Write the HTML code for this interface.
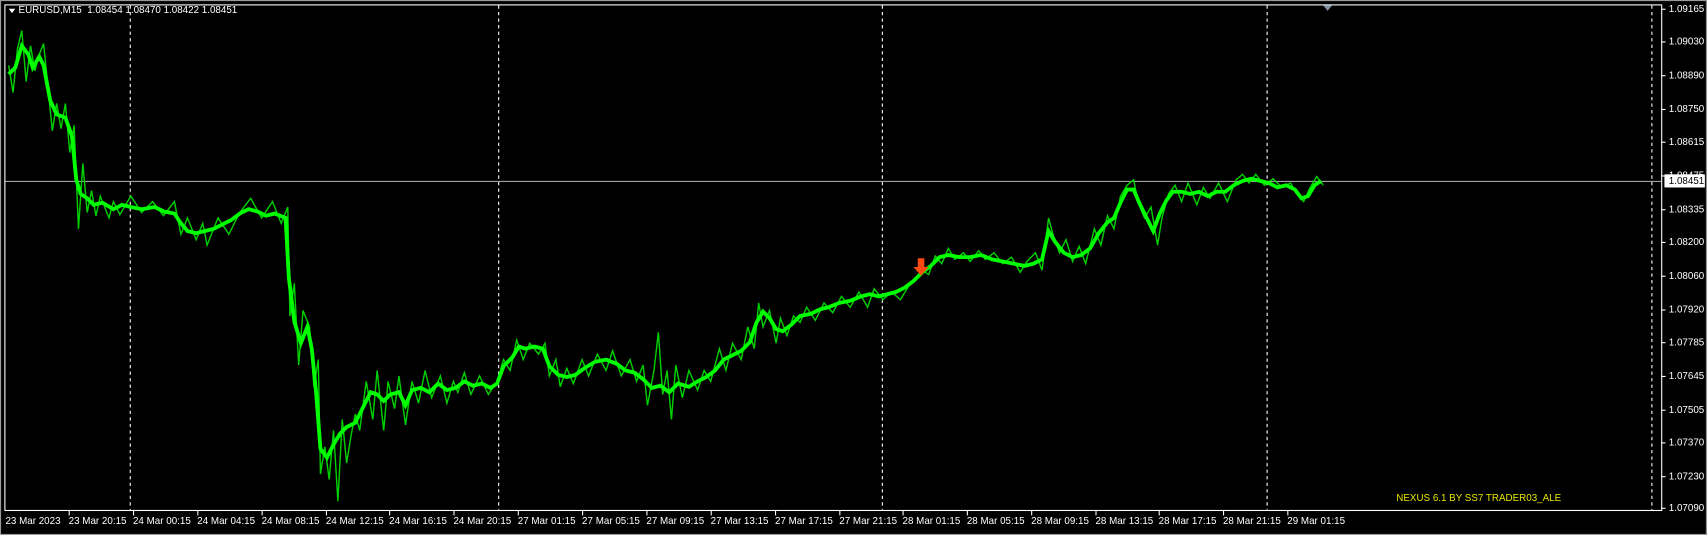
<!DOCTYPE html>
<html><head><meta charset="utf-8"><style>
html,body{margin:0;padding:0;background:#000;overflow:hidden}
#w{width:1566px;height:491px;transform:scale(1.09,1.0896);transform-origin:0 0;position:relative;background:#000;font-family:"Liberation Sans",sans-serif}
.t{position:absolute;font-size:9px;line-height:11px;color:#fff;white-space:nowrap}
</style></head><body><div id="w">
<svg width="1566" height="491" style="position:absolute;left:0;top:0">
<rect x="0" y="0" width="1566" height="491" fill="#000"/>
<rect x="0.5" y="0.5" width="1565" height="490" fill="none" stroke="#9a9a9a"/>
<rect x="4.5" y="4.5" width="1520" height="464" fill="none" stroke="#fff"/>
<g stroke="#fff" stroke-dasharray="3,3" stroke-width="1">
<line x1="119.5" y1="5" x2="119.5" y2="468"/>
<line x1="457.5" y1="5" x2="457.5" y2="468"/>
<line x1="809.5" y1="5" x2="809.5" y2="468"/>
<line x1="1162.5" y1="5" x2="1162.5" y2="468"/>
<line x1="1515.5" y1="5" x2="1515.5" y2="468"/>
</g>
<line x1="5" y1="166.5" x2="1524" y2="166.5" stroke="#a0a0a8"/>
<polygon points="1214,5 1222,5 1218,10" fill="#7f8fa0"/>
<polyline fill="none" stroke="#00d000" stroke-width="1.3" points="8,60 12,85 16,45 20,28 24,75 28,42 32,65 36,50 40,40 44,80 48,120 52,95 56,118 60,95 64,140 68,115 72,210 76,150 80,195 84,175 88,198 92,180 100,200 104,185 110,197 120,180 130,195 140,185 150,198 160,185 166,215 172,200 180,220 186,205 190,225 200,200 210,215 220,195 230,182 240,200 250,185 258,205 264,190 266,290 270,260 274,335 278,285 284,300 288,355 292,330 294,435 298,410 302,440 306,395 310,460 314,385 318,425 322,400 326,380 330,395 336,350 342,385 346,340 352,395 356,350 362,375 366,345 372,390 378,350 384,370 390,340 396,365 404,345 410,370 416,350 420,360 426,342 432,362 440,345 448,362 456,350 462,330 468,340 474,312 480,330 486,315 494,325 500,315 504,345 510,330 514,355 520,338 526,352 534,330 540,345 548,325 556,340 562,322 570,345 578,330 584,350 590,335 594,372 600,340 604,305 608,362 612,340 616,385 620,335 626,365 632,340 640,358 646,340 652,350 660,320 666,340 672,315 680,330 686,300 692,320 696,278 700,300 706,285 712,315 716,292 722,308 728,290 734,296 740,282 748,294 756,278 764,287 772,272 780,282 788,268 796,282 802,265 810,275 818,268 826,275 834,262 842,255 846,248 852,252 858,235 864,242 870,228 876,238 884,232 890,240 898,230 904,238 912,232 920,242 928,236 936,250 942,240 950,232 956,248 962,200 966,215 972,232 978,220 984,240 990,226 996,242 1004,210 1010,225 1016,198 1022,210 1028,180 1034,170 1040,165 1044,185 1050,200 1056,190 1062,225 1066,200 1072,178 1078,170 1084,185 1090,168 1098,188 1104,172 1110,182 1118,168 1126,185 1134,165 1140,160 1146,168 1152,160 1160,170 1168,164 1176,172 1184,168 1190,178 1196,185 1202,172 1208,162 1214,170"/>
<polyline fill="none" stroke="#00ff00" stroke-width="3.5" points="8,68 14,62 20,42 26,50 30,62 36,52 40,60 46,92 52,105 60,108 66,125 70,165 74,178 80,182 86,188 94,186 104,192 112,188 120,190 130,192 142,190 150,194 160,196 166,205 172,212 180,214 188,212 196,210 204,206 212,202 220,196 228,192 236,194 244,198 252,196 262,200 265,255 270,295 276,315 282,300 286,320 290,360 294,412 300,420 306,408 312,398 318,392 326,388 334,372 340,360 346,362 352,368 358,362 366,360 372,372 378,358 386,356 394,360 402,352 410,358 418,356 426,350 434,354 442,352 450,356 456,352 462,336 470,328 476,318 482,320 490,318 498,320 504,336 512,344 520,346 528,344 536,338 546,332 556,330 566,334 574,340 582,342 590,348 598,356 606,354 614,360 622,352 632,355 640,350 648,346 656,340 664,330 672,326 680,322 688,314 694,296 700,286 706,292 712,302 718,304 726,298 734,290 744,288 752,284 760,282 770,278 780,276 790,272 798,270 806,272 814,270 822,268 830,264 838,258 846,250 854,244 862,236 870,234 880,236 890,236 900,234 910,238 920,240 930,242 940,244 948,242 956,238 962,212 968,222 976,232 984,236 992,234 1000,228 1008,214 1016,204 1022,200 1028,186 1034,174 1040,174 1046,188 1052,200 1058,212 1064,196 1070,184 1076,176 1084,176 1092,178 1100,176 1108,180 1116,176 1124,176 1132,170 1140,166 1148,164 1156,166 1164,168 1172,172 1180,170 1188,174 1194,182 1200,180 1206,170 1212,166"/>
<path d="M842,237 h6 v8 h4 l-7,8 l-7,-8 h4 z" fill="#ff4a12"/>
<g stroke="#fff">
<line x1="1524" y1="8.5" x2="1528" y2="8.5"/><line x1="1524" y1="38.5" x2="1528" y2="38.5"/><line x1="1524" y1="69.5" x2="1528" y2="69.5"/><line x1="1524" y1="100.5" x2="1528" y2="100.5"/><line x1="1524" y1="130.5" x2="1528" y2="130.5"/><line x1="1524" y1="161.5" x2="1528" y2="161.5"/><line x1="1524" y1="192.5" x2="1528" y2="192.5"/><line x1="1524" y1="222.5" x2="1528" y2="222.5"/><line x1="1524" y1="253.5" x2="1528" y2="253.5"/><line x1="1524" y1="284.5" x2="1528" y2="284.5"/><line x1="1524" y1="314.5" x2="1528" y2="314.5"/><line x1="1524" y1="345.5" x2="1528" y2="345.5"/><line x1="1524" y1="376.5" x2="1528" y2="376.5"/><line x1="1524" y1="406.5" x2="1528" y2="406.5"/><line x1="1524" y1="437.5" x2="1528" y2="437.5"/><line x1="1524" y1="466.5" x2="1528" y2="466.5"/>
<line x1="63.5" y1="468" x2="63.5" y2="473"/><line x1="122.5" y1="468" x2="122.5" y2="473"/><line x1="181.5" y1="468" x2="181.5" y2="473"/><line x1="240.5" y1="468" x2="240.5" y2="473"/><line x1="299.5" y1="468" x2="299.5" y2="473"/><line x1="357.5" y1="468" x2="357.5" y2="473"/><line x1="416.5" y1="468" x2="416.5" y2="473"/><line x1="475.5" y1="468" x2="475.5" y2="473"/><line x1="534.5" y1="468" x2="534.5" y2="473"/><line x1="593.5" y1="468" x2="593.5" y2="473"/><line x1="652.5" y1="468" x2="652.5" y2="473"/><line x1="711.5" y1="468" x2="711.5" y2="473"/><line x1="770.5" y1="468" x2="770.5" y2="473"/><line x1="828.5" y1="468" x2="828.5" y2="473"/><line x1="887.5" y1="468" x2="887.5" y2="473"/><line x1="946.5" y1="468" x2="946.5" y2="473"/><line x1="1005.5" y1="468" x2="1005.5" y2="473"/><line x1="1063.5" y1="468" x2="1063.5" y2="473"/><line x1="1122.5" y1="468" x2="1122.5" y2="473"/><line x1="1181.5" y1="468" x2="1181.5" y2="473"/>
</g>
<rect x="1527" y="160" width="37" height="12" fill="#fff"/>
<polygon points="8,8 14,8 11,12" fill="#fff"/>
</svg>
<div class="t" style="left:17px;top:4px">EURUSD,M15&nbsp; 1.08454 1.08470 1.08422 1.08451</div>
<div class="t" style="left:1531px;top:3px">1.09165</div>
<div class="t" style="left:1531px;top:33px">1.09030</div>
<div class="t" style="left:1531px;top:64px">1.08890</div>
<div class="t" style="left:1531px;top:95px">1.08750</div>
<div class="t" style="left:1531px;top:125px">1.08615</div>
<div class="t" style="left:1531px;top:156px">1.08475</div>
<div class="t" style="left:1531px;top:161px;color:#000;background:#fff">1.08451</div>
<div class="t" style="left:1531px;top:187px">1.08335</div>
<div class="t" style="left:1531px;top:217px">1.08200</div>
<div class="t" style="left:1531px;top:248px">1.08060</div>
<div class="t" style="left:1531px;top:279px">1.07920</div>
<div class="t" style="left:1531px;top:309px">1.07785</div>
<div class="t" style="left:1531px;top:340px">1.07645</div>
<div class="t" style="left:1531px;top:371px">1.07505</div>
<div class="t" style="left:1531px;top:401px">1.07370</div>
<div class="t" style="left:1531px;top:432px">1.07230</div>
<div class="t" style="left:1531px;top:461px">1.07090</div>
<div class="t" style="left:5px;top:473px">23 Mar 2023</div>
<div class="t" style="left:63px;top:473px">23 Mar 20:15</div>
<div class="t" style="left:122px;top:473px">24 Mar 00:15</div>
<div class="t" style="left:181px;top:473px">24 Mar 04:15</div>
<div class="t" style="left:240px;top:473px">24 Mar 08:15</div>
<div class="t" style="left:299px;top:473px">24 Mar 12:15</div>
<div class="t" style="left:357px;top:473px">24 Mar 16:15</div>
<div class="t" style="left:416px;top:473px">24 Mar 20:15</div>
<div class="t" style="left:475px;top:473px">27 Mar 01:15</div>
<div class="t" style="left:534px;top:473px">27 Mar 05:15</div>
<div class="t" style="left:593px;top:473px">27 Mar 09:15</div>
<div class="t" style="left:652px;top:473px">27 Mar 13:15</div>
<div class="t" style="left:711px;top:473px">27 Mar 17:15</div>
<div class="t" style="left:770px;top:473px">27 Mar 21:15</div>
<div class="t" style="left:828px;top:473px">28 Mar 01:15</div>
<div class="t" style="left:887px;top:473px">28 Mar 05:15</div>
<div class="t" style="left:946px;top:473px">28 Mar 09:15</div>
<div class="t" style="left:1005px;top:473px">28 Mar 13:15</div>
<div class="t" style="left:1063px;top:473px">28 Mar 17:15</div>
<div class="t" style="left:1122px;top:473px">28 Mar 21:15</div>
<div class="t" style="left:1181px;top:473px">29 Mar 01:15</div>
<div class="t" style="left:1281px;top:452px;color:#e6e600">NEXUS 6.1 BY SS7 TRADER03_ALE</div>
</div></body></html>
